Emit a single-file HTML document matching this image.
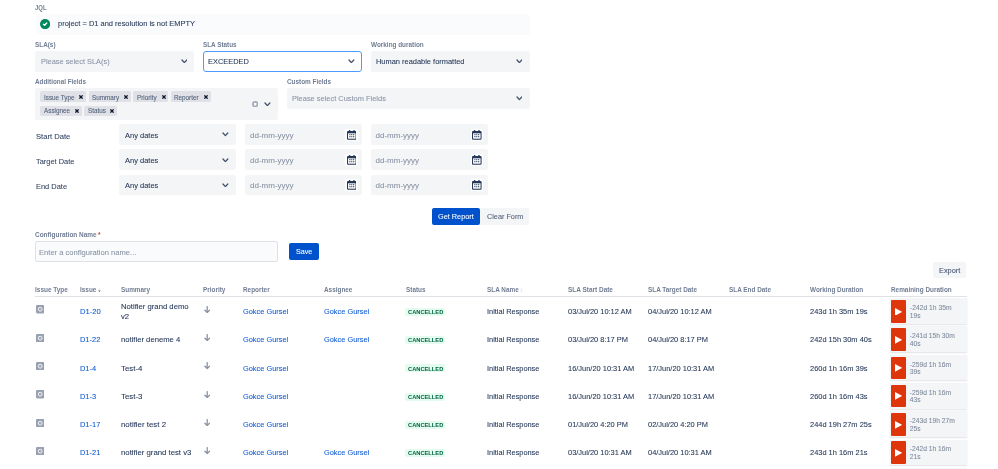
<!DOCTYPE html>
<html><head><meta charset="utf-8"><style>
html,body{margin:0;padding:0;background:#fff;width:998px;height:469px;overflow:hidden;}
body{position:relative;font-family:"Liberation Sans",sans-serif;}
.t{position:absolute;white-space:nowrap;transform-origin:0 0;}
.r{position:absolute;display:block;}
body>div,body>svg{filter:blur(0.28px);}
</style></head><body>
<div class="t" style="left:35.00px;top:4px;font-size:6.7px;line-height:7.484px;color:#707d93;font-weight:bold;transform:scaleX(0.8842);">JQL</div>
<div class="r" style="left:35.50px;top:13.50px;width:494.50px;height:21.00px;background:#fafbfc;border-radius:3px;"></div>
<svg class="r" style="left:39.8px;top:18.9px" width="10.2" height="10.2" viewBox="0 0 10 10"><circle cx="5" cy="5" r="5" fill="#00875a"/><path d="M3.4 5.1 L4.5 6.1 L6.6 4.0" fill="none" stroke="#fff" stroke-width="1.4" stroke-linecap="round" stroke-linejoin="round"/></svg>
<div class="t" style="left:58.30px;top:20px;font-size:8.0px;line-height:8.936px;color:#253858;font-weight:normal;transform:scaleX(0.9322);-webkit-text-stroke:0.08px currentColor;">project = D1 and resolution is not EMPTY</div>
<div class="t" style="left:35.00px;top:41px;font-size:6.7px;line-height:7.484px;color:#707d93;font-weight:bold;transform:scaleX(0.9514);">SLA(s)</div>
<div class="t" style="left:203.00px;top:41px;font-size:6.7px;line-height:7.484px;color:#707d93;font-weight:bold;transform:scaleX(0.9475);">SLA Status</div>
<div class="t" style="left:371.00px;top:41px;font-size:6.7px;line-height:7.484px;color:#707d93;font-weight:bold;transform:scaleX(0.9552);">Working duration</div>
<div class="r" style="left:35.00px;top:51.00px;width:159.00px;height:20.60px;background:#f4f5f7;border-radius:2.5px;"></div>
<div class="t" style="left:40.50px;top:58px;font-size:8.0px;line-height:8.936px;color:#8993a4;font-weight:normal;transform:scaleX(0.9239);-webkit-text-stroke:0.08px currentColor;">Please select SLA(s)</div>
<svg class="r" style="left:180.60px;top:58.70px" width="6.80" height="4.60"><path d="M1 1 L3.40 3.60 L5.80 1" fill="none" stroke="#42526e" stroke-width="1.3" stroke-linecap="round" stroke-linejoin="round"/></svg>
<div class="r" style="left:203.00px;top:51.00px;width:159.00px;height:20.60px;background:#ffffff;border:1.4px solid #4c9aff;box-sizing:border-box;border-radius:3px;"></div>
<div class="t" style="left:208.00px;top:58px;font-size:8.0px;line-height:8.936px;color:#253858;font-weight:normal;transform:scaleX(0.9300);-webkit-text-stroke:0.08px currentColor;">EXCEEDED</div>
<svg class="r" style="left:348.10px;top:58.70px" width="6.80" height="4.60"><path d="M1 1 L3.40 3.60 L5.80 1" fill="none" stroke="#42526e" stroke-width="1.3" stroke-linecap="round" stroke-linejoin="round"/></svg>
<div class="r" style="left:371.00px;top:51.00px;width:159.00px;height:20.60px;background:#f4f5f7;border-radius:2.5px;"></div>
<div class="t" style="left:376.00px;top:58px;font-size:8.0px;line-height:8.936px;color:#253858;font-weight:normal;transform:scaleX(0.9300);-webkit-text-stroke:0.08px currentColor;">Human readable formatted</div>
<svg class="r" style="left:515.60px;top:58.70px" width="6.80" height="4.60"><path d="M1 1 L3.40 3.60 L5.80 1" fill="none" stroke="#42526e" stroke-width="1.3" stroke-linecap="round" stroke-linejoin="round"/></svg>
<div class="t" style="left:35.00px;top:78px;font-size:6.7px;line-height:7.484px;color:#707d93;font-weight:bold;transform:scaleX(0.9467);">Additional Fields</div>
<div class="t" style="left:287.00px;top:78px;font-size:6.7px;line-height:7.484px;color:#707d93;font-weight:bold;transform:scaleX(0.9552);">Custom Fields</div>
<div class="r" style="left:35.00px;top:88.30px;width:243.00px;height:31.70px;background:#f4f5f7;border-radius:2.5px;"></div>
<div class="r" style="left:40.40px;top:91.30px;width:45.50px;height:10.50px;background:#dfe1e6;border-radius:1.5px;"></div>
<div class="t" style="left:43.70px;top:94px;font-size:6.8px;line-height:7.596px;color:#505f79;font-weight:normal;transform:scaleX(0.9300);-webkit-text-stroke:0.08px currentColor;">Issue Type</div>
<svg class="r" style="left:79.30px;top:94.55px" width="4" height="4"><path d="M0.8 0.8 L3.2 3.2 M3.2 0.8 L0.8 3.2" stroke="#0f1a2e" stroke-width="1.25" stroke-linecap="square"/></svg>
<div class="r" style="left:88.90px;top:91.30px;width:41.90px;height:10.50px;background:#dfe1e6;border-radius:1.5px;"></div>
<div class="t" style="left:92.20px;top:94px;font-size:6.8px;line-height:7.596px;color:#505f79;font-weight:normal;transform:scaleX(0.9300);-webkit-text-stroke:0.08px currentColor;">Summary</div>
<svg class="r" style="left:124.20px;top:94.55px" width="4" height="4"><path d="M0.8 0.8 L3.2 3.2 M3.2 0.8 L0.8 3.2" stroke="#0f1a2e" stroke-width="1.25" stroke-linecap="square"/></svg>
<div class="r" style="left:133.30px;top:91.30px;width:35.20px;height:10.50px;background:#dfe1e6;border-radius:1.5px;"></div>
<div class="t" style="left:136.60px;top:94px;font-size:6.8px;line-height:7.596px;color:#505f79;font-weight:normal;transform:scaleX(0.9300);-webkit-text-stroke:0.08px currentColor;">Priority</div>
<svg class="r" style="left:161.90px;top:94.55px" width="4" height="4"><path d="M0.8 0.8 L3.2 3.2 M3.2 0.8 L0.8 3.2" stroke="#0f1a2e" stroke-width="1.25" stroke-linecap="square"/></svg>
<div class="r" style="left:171.10px;top:91.30px;width:39.70px;height:10.50px;background:#dfe1e6;border-radius:1.5px;"></div>
<div class="t" style="left:174.40px;top:94px;font-size:6.8px;line-height:7.596px;color:#505f79;font-weight:normal;transform:scaleX(0.9300);-webkit-text-stroke:0.08px currentColor;">Reporter</div>
<svg class="r" style="left:204.20px;top:94.55px" width="4" height="4"><path d="M0.8 0.8 L3.2 3.2 M3.2 0.8 L0.8 3.2" stroke="#0f1a2e" stroke-width="1.25" stroke-linecap="square"/></svg>
<div class="r" style="left:40.40px;top:105.60px;width:41.40px;height:10.50px;background:#dfe1e6;border-radius:1.5px;"></div>
<div class="t" style="left:43.70px;top:107px;font-size:6.8px;line-height:7.596px;color:#505f79;font-weight:normal;transform:scaleX(0.9300);-webkit-text-stroke:0.08px currentColor;">Assignee</div>
<svg class="r" style="left:75.20px;top:108.85px" width="4" height="4"><path d="M0.8 0.8 L3.2 3.2 M3.2 0.8 L0.8 3.2" stroke="#0f1a2e" stroke-width="1.25" stroke-linecap="square"/></svg>
<div class="r" style="left:84.20px;top:105.60px;width:32.80px;height:10.50px;background:#dfe1e6;border-radius:1.5px;"></div>
<div class="t" style="left:87.50px;top:107px;font-size:6.8px;line-height:7.596px;color:#505f79;font-weight:normal;transform:scaleX(0.9300);-webkit-text-stroke:0.08px currentColor;">Status</div>
<svg class="r" style="left:110.40px;top:108.85px" width="4" height="4"><path d="M0.8 0.8 L3.2 3.2 M3.2 0.8 L0.8 3.2" stroke="#0f1a2e" stroke-width="1.25" stroke-linecap="square"/></svg>
<svg class="r" style="left:251.9px;top:101.1px" width="6.4" height="6.4" viewBox="0 0 10 10"><circle cx="5" cy="5" r="5" fill="#a5adba"/><path d="M3.4 3.4 L6.6 6.6 M6.6 3.4 L3.4 6.6" stroke="#ffffff" stroke-width="2.0" stroke-linecap="butt"/></svg>
<svg class="r" style="left:264.40px;top:101.80px" width="6.80" height="4.60"><path d="M1 1 L3.40 3.60 L5.80 1" fill="none" stroke="#42526e" stroke-width="1.3" stroke-linecap="round" stroke-linejoin="round"/></svg>
<div class="r" style="left:287.00px;top:88.30px;width:243.00px;height:20.30px;background:#f4f5f7;border-radius:2.5px;"></div>
<div class="t" style="left:292.00px;top:95px;font-size:8.0px;line-height:8.936px;color:#8993a4;font-weight:normal;transform:scaleX(0.9300);-webkit-text-stroke:0.08px currentColor;">Please select Custom Fields</div>
<svg class="r" style="left:515.60px;top:96.20px" width="6.80" height="4.60"><path d="M1 1 L3.40 3.60 L5.80 1" fill="none" stroke="#42526e" stroke-width="1.3" stroke-linecap="round" stroke-linejoin="round"/></svg>
<div class="t" style="left:36.00px;top:133px;font-size:8.0px;line-height:8.936px;color:#344563;font-weight:normal;transform:scaleX(0.9524);-webkit-text-stroke:0.08px currentColor;">Start Date</div>
<div class="r" style="left:119.00px;top:124.30px;width:117.00px;height:20.80px;background:#f4f5f7;border-radius:2.5px;"></div>
<div class="t" style="left:124.50px;top:132px;font-size:8.0px;line-height:8.936px;color:#253858;font-weight:normal;transform:scaleX(0.9360);-webkit-text-stroke:0.08px currentColor;">Any dates</div>
<svg class="r" style="left:222.40px;top:132.40px" width="6.80" height="4.60"><path d="M1 1 L3.40 3.60 L5.80 1" fill="none" stroke="#42526e" stroke-width="1.3" stroke-linecap="round" stroke-linejoin="round"/></svg>
<div class="r" style="left:245.00px;top:124.30px;width:117.00px;height:20.80px;background:#f4f5f7;border-radius:2.5px;"></div>
<div class="t" style="left:250.00px;top:132px;font-size:8.0px;line-height:8.936px;color:#8993a4;font-weight:normal;-webkit-text-stroke:0.08px currentColor;">dd-mm-yyyy</div>
<div class="r" style="left:345.20px;top:128.90px;width:12.6px;height:12px;background:#fff;border-radius:1.5px;"></div>
<svg class="r" style="left:346.80px;top:130.00px" width="9.6" height="9.8" viewBox="0 0 9.6 9.8"><rect x="0" y="0.9" width="9.6" height="8.9" rx="1.1" fill="#253858"/><rect x="2.0" y="0" width="1.3" height="2" rx="0.4" fill="#253858"/><rect x="6.3" y="0" width="1.3" height="2" rx="0.4" fill="#253858"/><rect x="1.05" y="3.3" width="7.5" height="5.4" fill="#ffffff"/><circle cx="2.90" cy="4.70" r="0.62" fill="#253858"/><circle cx="2.90" cy="6.70" r="0.62" fill="#253858"/><circle cx="4.80" cy="4.70" r="0.62" fill="#253858"/><circle cx="4.80" cy="6.70" r="0.62" fill="#253858"/><circle cx="6.70" cy="4.70" r="0.62" fill="#253858"/><circle cx="6.70" cy="6.70" r="0.62" fill="#253858"/></svg>
<div class="r" style="left:370.50px;top:124.30px;width:117.00px;height:20.80px;background:#f4f5f7;border-radius:2.5px;"></div>
<div class="t" style="left:375.50px;top:132px;font-size:8.0px;line-height:8.936px;color:#8993a4;font-weight:normal;-webkit-text-stroke:0.08px currentColor;">dd-mm-yyyy</div>
<div class="r" style="left:470.70px;top:128.90px;width:12.6px;height:12px;background:#fff;border-radius:1.5px;"></div>
<svg class="r" style="left:472.30px;top:130.00px" width="9.6" height="9.8" viewBox="0 0 9.6 9.8"><rect x="0" y="0.9" width="9.6" height="8.9" rx="1.1" fill="#253858"/><rect x="2.0" y="0" width="1.3" height="2" rx="0.4" fill="#253858"/><rect x="6.3" y="0" width="1.3" height="2" rx="0.4" fill="#253858"/><rect x="1.05" y="3.3" width="7.5" height="5.4" fill="#ffffff"/><circle cx="2.90" cy="4.70" r="0.62" fill="#253858"/><circle cx="2.90" cy="6.70" r="0.62" fill="#253858"/><circle cx="4.80" cy="4.70" r="0.62" fill="#253858"/><circle cx="4.80" cy="6.70" r="0.62" fill="#253858"/><circle cx="6.70" cy="4.70" r="0.62" fill="#253858"/><circle cx="6.70" cy="6.70" r="0.62" fill="#253858"/></svg>
<div class="t" style="left:36.00px;top:158px;font-size:8.0px;line-height:8.936px;color:#344563;font-weight:normal;transform:scaleX(0.9300);-webkit-text-stroke:0.08px currentColor;">Target Date</div>
<div class="r" style="left:119.00px;top:149.47px;width:117.00px;height:20.80px;background:#f4f5f7;border-radius:2.5px;"></div>
<div class="t" style="left:124.50px;top:157px;font-size:8.0px;line-height:8.936px;color:#253858;font-weight:normal;transform:scaleX(0.9360);-webkit-text-stroke:0.08px currentColor;">Any dates</div>
<svg class="r" style="left:222.40px;top:157.57px" width="6.80" height="4.60"><path d="M1 1 L3.40 3.60 L5.80 1" fill="none" stroke="#42526e" stroke-width="1.3" stroke-linecap="round" stroke-linejoin="round"/></svg>
<div class="r" style="left:245.00px;top:149.47px;width:117.00px;height:20.80px;background:#f4f5f7;border-radius:2.5px;"></div>
<div class="t" style="left:250.00px;top:157px;font-size:8.0px;line-height:8.936px;color:#8993a4;font-weight:normal;-webkit-text-stroke:0.08px currentColor;">dd-mm-yyyy</div>
<div class="r" style="left:345.20px;top:154.07px;width:12.6px;height:12px;background:#fff;border-radius:1.5px;"></div>
<svg class="r" style="left:346.80px;top:155.17px" width="9.6" height="9.8" viewBox="0 0 9.6 9.8"><rect x="0" y="0.9" width="9.6" height="8.9" rx="1.1" fill="#253858"/><rect x="2.0" y="0" width="1.3" height="2" rx="0.4" fill="#253858"/><rect x="6.3" y="0" width="1.3" height="2" rx="0.4" fill="#253858"/><rect x="1.05" y="3.3" width="7.5" height="5.4" fill="#ffffff"/><circle cx="2.90" cy="4.70" r="0.62" fill="#253858"/><circle cx="2.90" cy="6.70" r="0.62" fill="#253858"/><circle cx="4.80" cy="4.70" r="0.62" fill="#253858"/><circle cx="4.80" cy="6.70" r="0.62" fill="#253858"/><circle cx="6.70" cy="4.70" r="0.62" fill="#253858"/><circle cx="6.70" cy="6.70" r="0.62" fill="#253858"/></svg>
<div class="r" style="left:370.50px;top:149.47px;width:117.00px;height:20.80px;background:#f4f5f7;border-radius:2.5px;"></div>
<div class="t" style="left:375.50px;top:157px;font-size:8.0px;line-height:8.936px;color:#8993a4;font-weight:normal;-webkit-text-stroke:0.08px currentColor;">dd-mm-yyyy</div>
<div class="r" style="left:470.70px;top:154.07px;width:12.6px;height:12px;background:#fff;border-radius:1.5px;"></div>
<svg class="r" style="left:472.30px;top:155.17px" width="9.6" height="9.8" viewBox="0 0 9.6 9.8"><rect x="0" y="0.9" width="9.6" height="8.9" rx="1.1" fill="#253858"/><rect x="2.0" y="0" width="1.3" height="2" rx="0.4" fill="#253858"/><rect x="6.3" y="0" width="1.3" height="2" rx="0.4" fill="#253858"/><rect x="1.05" y="3.3" width="7.5" height="5.4" fill="#ffffff"/><circle cx="2.90" cy="4.70" r="0.62" fill="#253858"/><circle cx="2.90" cy="6.70" r="0.62" fill="#253858"/><circle cx="4.80" cy="4.70" r="0.62" fill="#253858"/><circle cx="4.80" cy="6.70" r="0.62" fill="#253858"/><circle cx="6.70" cy="4.70" r="0.62" fill="#253858"/><circle cx="6.70" cy="6.70" r="0.62" fill="#253858"/></svg>
<div class="t" style="left:36.00px;top:183px;font-size:8.0px;line-height:8.936px;color:#344563;font-weight:normal;transform:scaleX(0.9300);-webkit-text-stroke:0.08px currentColor;">End Date</div>
<div class="r" style="left:119.00px;top:174.64px;width:117.00px;height:20.80px;background:#f4f5f7;border-radius:2.5px;"></div>
<div class="t" style="left:124.50px;top:182px;font-size:8.0px;line-height:8.936px;color:#253858;font-weight:normal;transform:scaleX(0.9360);-webkit-text-stroke:0.08px currentColor;">Any dates</div>
<svg class="r" style="left:222.40px;top:182.74px" width="6.80" height="4.60"><path d="M1 1 L3.40 3.60 L5.80 1" fill="none" stroke="#42526e" stroke-width="1.3" stroke-linecap="round" stroke-linejoin="round"/></svg>
<div class="r" style="left:245.00px;top:174.64px;width:117.00px;height:20.80px;background:#f4f5f7;border-radius:2.5px;"></div>
<div class="t" style="left:250.00px;top:182px;font-size:8.0px;line-height:8.936px;color:#8993a4;font-weight:normal;-webkit-text-stroke:0.08px currentColor;">dd-mm-yyyy</div>
<div class="r" style="left:345.20px;top:179.24px;width:12.6px;height:12px;background:#fff;border-radius:1.5px;"></div>
<svg class="r" style="left:346.80px;top:180.34px" width="9.6" height="9.8" viewBox="0 0 9.6 9.8"><rect x="0" y="0.9" width="9.6" height="8.9" rx="1.1" fill="#253858"/><rect x="2.0" y="0" width="1.3" height="2" rx="0.4" fill="#253858"/><rect x="6.3" y="0" width="1.3" height="2" rx="0.4" fill="#253858"/><rect x="1.05" y="3.3" width="7.5" height="5.4" fill="#ffffff"/><circle cx="2.90" cy="4.70" r="0.62" fill="#253858"/><circle cx="2.90" cy="6.70" r="0.62" fill="#253858"/><circle cx="4.80" cy="4.70" r="0.62" fill="#253858"/><circle cx="4.80" cy="6.70" r="0.62" fill="#253858"/><circle cx="6.70" cy="4.70" r="0.62" fill="#253858"/><circle cx="6.70" cy="6.70" r="0.62" fill="#253858"/></svg>
<div class="r" style="left:370.50px;top:174.64px;width:117.00px;height:20.80px;background:#f4f5f7;border-radius:2.5px;"></div>
<div class="t" style="left:375.50px;top:182px;font-size:8.0px;line-height:8.936px;color:#8993a4;font-weight:normal;-webkit-text-stroke:0.08px currentColor;">dd-mm-yyyy</div>
<div class="r" style="left:470.70px;top:179.24px;width:12.6px;height:12px;background:#fff;border-radius:1.5px;"></div>
<svg class="r" style="left:472.30px;top:180.34px" width="9.6" height="9.8" viewBox="0 0 9.6 9.8"><rect x="0" y="0.9" width="9.6" height="8.9" rx="1.1" fill="#253858"/><rect x="2.0" y="0" width="1.3" height="2" rx="0.4" fill="#253858"/><rect x="6.3" y="0" width="1.3" height="2" rx="0.4" fill="#253858"/><rect x="1.05" y="3.3" width="7.5" height="5.4" fill="#ffffff"/><circle cx="2.90" cy="4.70" r="0.62" fill="#253858"/><circle cx="2.90" cy="6.70" r="0.62" fill="#253858"/><circle cx="4.80" cy="4.70" r="0.62" fill="#253858"/><circle cx="4.80" cy="6.70" r="0.62" fill="#253858"/><circle cx="6.70" cy="4.70" r="0.62" fill="#253858"/><circle cx="6.70" cy="6.70" r="0.62" fill="#253858"/></svg>
<div class="r" style="left:432.00px;top:208.00px;width:48.20px;height:16.50px;background:#0052cc;border-radius:2px;"></div>
<div class="t" style="left:438.20px;top:213px;font-size:8.0px;line-height:8.936px;color:#ffffff;font-weight:normal;transform:scaleX(0.9149);-webkit-text-stroke:0.08px currentColor;">Get Report</div>
<div class="r" style="left:480.20px;top:208.00px;width:49.00px;height:16.50px;background:#f4f5f7;border-radius:2px;"></div>
<div class="t" style="left:486.70px;top:213px;font-size:8.0px;line-height:8.936px;color:#505f79;font-weight:normal;transform:scaleX(0.9099);-webkit-text-stroke:0.08px currentColor;">Clear Form</div>
<div class="t" style="left:35.00px;top:231px;font-size:6.7px;line-height:7.484px;color:#707d93;font-weight:bold;transform:scaleX(0.9655);">Configuration Name</div>
<div class="t" style="left:98.30px;top:231px;font-size:6.7px;line-height:7.484px;color:#de350b;font-weight:bold;transform:scaleX(0.9552);">*</div>
<div class="r" style="left:35.00px;top:241.00px;width:243.00px;height:20.50px;background:#fafbfc;border:1px solid #dfe1e6;box-sizing:border-box;border-radius:2px;"></div>
<div class="t" style="left:39.40px;top:249px;font-size:8.0px;line-height:8.936px;color:#8993a4;font-weight:normal;transform:scaleX(0.9481);-webkit-text-stroke:0.08px currentColor;">Enter a configuration name...</div>
<div class="r" style="left:289.00px;top:243.00px;width:29.60px;height:17.00px;background:#0052cc;border-radius:2px;"></div>
<div class="t" style="left:295.60px;top:248px;font-size:8.0px;line-height:8.936px;color:#ffffff;font-weight:normal;transform:scaleX(0.8884);-webkit-text-stroke:0.08px currentColor;">Save</div>
<div class="r" style="left:933.40px;top:262.20px;width:32.70px;height:16.10px;background:#f4f5f7;border-radius:2px;"></div>
<div class="t" style="left:939.00px;top:267px;font-size:8.0px;line-height:8.936px;color:#42526e;font-weight:normal;transform:scaleX(0.9212);-webkit-text-stroke:0.08px currentColor;">Export</div>
<div class="t" style="left:35.00px;top:286px;font-size:6.7px;line-height:7.484px;color:#707d93;font-weight:bold;transform:scaleX(0.9657);">Issue Type</div>
<div class="t" style="left:80.20px;top:286px;font-size:6.7px;line-height:7.484px;color:#707d93;font-weight:bold;transform:scaleX(0.9552);">Issue</div>
<div class="t" style="left:121.20px;top:286px;font-size:6.7px;line-height:7.484px;color:#707d93;font-weight:bold;transform:scaleX(0.9552);">Summary</div>
<div class="t" style="left:202.50px;top:286px;font-size:6.7px;line-height:7.484px;color:#707d93;font-weight:bold;transform:scaleX(0.9552);">Priority</div>
<div class="t" style="left:243.00px;top:286px;font-size:6.7px;line-height:7.484px;color:#707d93;font-weight:bold;transform:scaleX(0.9552);">Reporter</div>
<div class="t" style="left:324.40px;top:286px;font-size:6.7px;line-height:7.484px;color:#707d93;font-weight:bold;transform:scaleX(0.9552);">Assignee</div>
<div class="t" style="left:405.80px;top:286px;font-size:6.7px;line-height:7.484px;color:#707d93;font-weight:bold;transform:scaleX(0.9552);">Status</div>
<div class="t" style="left:487.00px;top:286px;font-size:6.7px;line-height:7.484px;color:#707d93;font-weight:bold;transform:scaleX(0.9552);">SLA Name</div>
<div class="t" style="left:567.60px;top:286px;font-size:6.7px;line-height:7.484px;color:#707d93;font-weight:bold;transform:scaleX(0.9654);">SLA Start Date</div>
<div class="t" style="left:648.30px;top:286px;font-size:6.7px;line-height:7.484px;color:#707d93;font-weight:bold;transform:scaleX(0.9552);">SLA Target Date</div>
<div class="t" style="left:729.00px;top:286px;font-size:6.7px;line-height:7.484px;color:#707d93;font-weight:bold;transform:scaleX(0.9552);">SLA End Date</div>
<div class="t" style="left:809.90px;top:286px;font-size:6.7px;line-height:7.484px;color:#707d93;font-weight:bold;transform:scaleX(0.9504);">Working Duration</div>
<div class="t" style="left:890.60px;top:286px;font-size:6.7px;line-height:7.484px;color:#707d93;font-weight:bold;transform:scaleX(0.9552);">Remaining Duration</div>
<svg class="r" style="left:97.5px;top:287.5px" width="3" height="4.6"><path d="M0.2 1.5 L1.5 0.2 L2.8 1.5 Z" fill="#dfe1e6"/><path d="M0.2 2.6 L2.8 2.6 L1.5 4.3 Z" fill="#6b778c"/></svg>
<svg class="r" style="left:520px;top:287.5px" width="3" height="4.6"><path d="M0.2 1.5 L1.5 0.2 L2.8 1.5 Z" fill="#dfe1e6"/><path d="M0.2 2.6 L2.8 2.6 L1.5 4.3 Z" fill="#dfe1e6"/></svg>
<div class="r" style="left:35.00px;top:295.80px;width:931.50px;height:1.20px;background:#dfe1e6;"></div>
<svg class="r" style="left:35.8px;top:305.40px" width="8.4" height="8.4" viewBox="0 0 16 16"><rect width="16" height="16" rx="2.5" fill="#97a0af"/><circle cx="8" cy="8" r="3.7" fill="none" stroke="#fff" stroke-width="1.7"/><circle cx="8" cy="8" r="1.3" fill="#fff" fill-opacity="0.3"/></svg>
<div class="t" style="left:80.20px;top:308px;font-size:8.0px;line-height:8.936px;color:#0f5bd3;font-weight:normal;transform:scaleX(0.9500);-webkit-text-stroke:0.08px currentColor;">D1-20</div>
<div class="t" style="left:121.20px;top:303px;font-size:8.0px;line-height:8.936px;color:#253858;font-weight:normal;transform:scaleX(0.9622);-webkit-text-stroke:0.08px currentColor;">Notifier grand demo</div>
<div class="t" style="left:121.20px;top:313px;font-size:8.0px;line-height:8.936px;color:#253858;font-weight:normal;transform:scaleX(0.9600);-webkit-text-stroke:0.08px currentColor;">v2</div>
<svg class="r" style="left:203.8px;top:305.80px" width="6.4" height="7.4"><path d="M3.2 0.6 V6.4 M0.9 4.2 L3.2 6.5 L5.5 4.2" fill="none" stroke="#8993a4" stroke-width="1.3" stroke-linecap="round" stroke-linejoin="round"/></svg>
<div class="t" style="left:243.00px;top:308px;font-size:8.0px;line-height:8.936px;color:#0f5bd3;font-weight:normal;transform:scaleX(0.9242);-webkit-text-stroke:0.08px currentColor;">Gokce Gursel</div>
<div class="t" style="left:324.40px;top:308px;font-size:8.0px;line-height:8.936px;color:#0f5bd3;font-weight:normal;transform:scaleX(0.9242);-webkit-text-stroke:0.08px currentColor;">Gokce Gursel</div>
<div class="r" style="left:405.20px;top:307.80px;width:39.80px;height:8.00px;background:#e3fcef;border-radius:2px;"></div>
<div class="t" style="left:407.80px;top:309px;font-size:6.2px;line-height:6.925px;color:#006644;font-weight:bold;transform:scaleX(0.9252);">CANCELLED</div>
<div class="t" style="left:487.00px;top:308px;font-size:8.0px;line-height:8.936px;color:#253858;font-weight:normal;transform:scaleX(0.9206);-webkit-text-stroke:0.08px currentColor;">Initial Response</div>
<div class="t" style="left:567.60px;top:308px;font-size:8.0px;line-height:8.936px;color:#253858;font-weight:normal;transform:scaleX(0.9300);-webkit-text-stroke:0.08px currentColor;">03/Jul/20 10:12 AM</div>
<div class="t" style="left:648.30px;top:308px;font-size:8.0px;line-height:8.936px;color:#253858;font-weight:normal;transform:scaleX(0.9300);-webkit-text-stroke:0.08px currentColor;">04/Jul/20 10:12 AM</div>
<div class="t" style="left:809.90px;top:308px;font-size:8.0px;line-height:8.936px;color:#253858;font-weight:normal;transform:scaleX(0.9300);-webkit-text-stroke:0.08px currentColor;">243d 1h 35m 19s</div>
<div class="r" style="left:890.00px;top:298.20px;width:76.50px;height:25.50px;background:#f4f5f7;box-shadow:0 1px 1.5px rgba(9,30,66,0.13);"></div>
<div class="r" style="left:890.80px;top:300.00px;width:15.10px;height:22.60px;background:#de350b;border-radius:1px;"></div>
<svg class="r" style="left:894.8px;top:307.60px" width="7.2" height="7.8"><path d="M0 0 L7.2 3.9 L0 7.8 Z" fill="#fff"/></svg>
<div class="t" style="left:909.80px;top:304px;font-size:6.7px;line-height:7.484px;color:#7f8a9b;font-weight:normal;transform:scaleX(1.0056);-webkit-text-stroke:0.08px currentColor;">-242d 1h 35m</div>
<div class="t" style="left:909.80px;top:312px;font-size:6.7px;line-height:7.484px;color:#7f8a9b;font-weight:normal;-webkit-text-stroke:0.08px currentColor;">19s</div>
<svg class="r" style="left:35.8px;top:333.68px" width="8.4" height="8.4" viewBox="0 0 16 16"><rect width="16" height="16" rx="2.5" fill="#97a0af"/><circle cx="8" cy="8" r="3.7" fill="none" stroke="#fff" stroke-width="1.7"/><circle cx="8" cy="8" r="1.3" fill="#fff" fill-opacity="0.3"/></svg>
<div class="t" style="left:80.20px;top:336px;font-size:8.0px;line-height:8.936px;color:#0f5bd3;font-weight:normal;transform:scaleX(0.9300);-webkit-text-stroke:0.08px currentColor;">D1-22</div>
<div class="t" style="left:121.20px;top:336px;font-size:8.0px;line-height:8.936px;color:#253858;font-weight:normal;transform:scaleX(0.9577);-webkit-text-stroke:0.08px currentColor;">notifier deneme 4</div>
<svg class="r" style="left:203.8px;top:334.08px" width="6.4" height="7.4"><path d="M3.2 0.6 V6.4 M0.9 4.2 L3.2 6.5 L5.5 4.2" fill="none" stroke="#8993a4" stroke-width="1.3" stroke-linecap="round" stroke-linejoin="round"/></svg>
<div class="t" style="left:243.00px;top:336px;font-size:8.0px;line-height:8.936px;color:#0f5bd3;font-weight:normal;transform:scaleX(0.9242);-webkit-text-stroke:0.08px currentColor;">Gokce Gursel</div>
<div class="t" style="left:324.40px;top:336px;font-size:8.0px;line-height:8.936px;color:#0f5bd3;font-weight:normal;transform:scaleX(0.9242);-webkit-text-stroke:0.08px currentColor;">Gokce Gursel</div>
<div class="r" style="left:405.20px;top:336.08px;width:39.80px;height:8.00px;background:#e3fcef;border-radius:2px;"></div>
<div class="t" style="left:407.80px;top:337px;font-size:6.2px;line-height:6.925px;color:#006644;font-weight:bold;transform:scaleX(0.9252);">CANCELLED</div>
<div class="t" style="left:487.00px;top:336px;font-size:8.0px;line-height:8.936px;color:#253858;font-weight:normal;transform:scaleX(0.9206);-webkit-text-stroke:0.08px currentColor;">Initial Response</div>
<div class="t" style="left:567.60px;top:336px;font-size:8.0px;line-height:8.936px;color:#253858;font-weight:normal;transform:scaleX(0.9300);-webkit-text-stroke:0.08px currentColor;">03/Jul/20 8:17 PM</div>
<div class="t" style="left:648.30px;top:336px;font-size:8.0px;line-height:8.936px;color:#253858;font-weight:normal;transform:scaleX(0.9300);-webkit-text-stroke:0.08px currentColor;">04/Jul/20 8:17 PM</div>
<div class="t" style="left:809.90px;top:336px;font-size:8.0px;line-height:8.936px;color:#253858;font-weight:normal;transform:scaleX(0.9300);-webkit-text-stroke:0.08px currentColor;">242d 15h 30m 40s</div>
<div class="r" style="left:890.00px;top:326.48px;width:76.50px;height:25.50px;background:#f4f5f7;box-shadow:0 1px 1.5px rgba(9,30,66,0.13);"></div>
<div class="r" style="left:890.80px;top:328.28px;width:15.10px;height:22.60px;background:#de350b;border-radius:1px;"></div>
<svg class="r" style="left:894.8px;top:335.88px" width="7.2" height="7.8"><path d="M0 0 L7.2 3.9 L0 7.8 Z" fill="#fff"/></svg>
<div class="t" style="left:909.80px;top:332px;font-size:6.7px;line-height:7.484px;color:#7f8a9b;font-weight:normal;-webkit-text-stroke:0.08px currentColor;">-241d 15h 30m</div>
<div class="t" style="left:909.80px;top:340px;font-size:6.7px;line-height:7.484px;color:#7f8a9b;font-weight:normal;-webkit-text-stroke:0.08px currentColor;">40s</div>
<svg class="r" style="left:35.8px;top:361.96px" width="8.4" height="8.4" viewBox="0 0 16 16"><rect width="16" height="16" rx="2.5" fill="#97a0af"/><circle cx="8" cy="8" r="3.7" fill="none" stroke="#fff" stroke-width="1.7"/><circle cx="8" cy="8" r="1.3" fill="#fff" fill-opacity="0.3"/></svg>
<div class="t" style="left:80.20px;top:365px;font-size:8.0px;line-height:8.936px;color:#0f5bd3;font-weight:normal;transform:scaleX(0.9300);-webkit-text-stroke:0.08px currentColor;">D1-4</div>
<div class="t" style="left:121.20px;top:365px;font-size:8.0px;line-height:8.936px;color:#253858;font-weight:normal;transform:scaleX(0.9823);-webkit-text-stroke:0.08px currentColor;">Test-4</div>
<svg class="r" style="left:203.8px;top:362.36px" width="6.4" height="7.4"><path d="M3.2 0.6 V6.4 M0.9 4.2 L3.2 6.5 L5.5 4.2" fill="none" stroke="#8993a4" stroke-width="1.3" stroke-linecap="round" stroke-linejoin="round"/></svg>
<div class="t" style="left:243.00px;top:365px;font-size:8.0px;line-height:8.936px;color:#0f5bd3;font-weight:normal;transform:scaleX(0.9242);-webkit-text-stroke:0.08px currentColor;">Gokce Gursel</div>
<div class="r" style="left:405.20px;top:364.36px;width:39.80px;height:8.00px;background:#e3fcef;border-radius:2px;"></div>
<div class="t" style="left:407.80px;top:366px;font-size:6.2px;line-height:6.925px;color:#006644;font-weight:bold;transform:scaleX(0.9252);">CANCELLED</div>
<div class="t" style="left:487.00px;top:365px;font-size:8.0px;line-height:8.936px;color:#253858;font-weight:normal;transform:scaleX(0.9206);-webkit-text-stroke:0.08px currentColor;">Initial Response</div>
<div class="t" style="left:567.60px;top:365px;font-size:8.0px;line-height:8.936px;color:#253858;font-weight:normal;transform:scaleX(0.9300);-webkit-text-stroke:0.08px currentColor;">16/Jun/20 10:31 AM</div>
<div class="t" style="left:648.30px;top:365px;font-size:8.0px;line-height:8.936px;color:#253858;font-weight:normal;transform:scaleX(0.9300);-webkit-text-stroke:0.08px currentColor;">17/Jun/20 10:31 AM</div>
<div class="t" style="left:809.90px;top:365px;font-size:8.0px;line-height:8.936px;color:#253858;font-weight:normal;transform:scaleX(0.9300);-webkit-text-stroke:0.08px currentColor;">260d 1h 16m 39s</div>
<div class="r" style="left:890.00px;top:354.76px;width:76.50px;height:25.50px;background:#f4f5f7;box-shadow:0 1px 1.5px rgba(9,30,66,0.13);"></div>
<div class="r" style="left:890.80px;top:356.56px;width:15.10px;height:22.60px;background:#de350b;border-radius:1px;"></div>
<svg class="r" style="left:894.8px;top:364.16px" width="7.2" height="7.8"><path d="M0 0 L7.2 3.9 L0 7.8 Z" fill="#fff"/></svg>
<div class="t" style="left:909.80px;top:361px;font-size:6.7px;line-height:7.484px;color:#7f8a9b;font-weight:normal;-webkit-text-stroke:0.08px currentColor;">-259d 1h 16m</div>
<div class="t" style="left:909.80px;top:368px;font-size:6.7px;line-height:7.484px;color:#7f8a9b;font-weight:normal;-webkit-text-stroke:0.08px currentColor;">39s</div>
<svg class="r" style="left:35.8px;top:390.24px" width="8.4" height="8.4" viewBox="0 0 16 16"><rect width="16" height="16" rx="2.5" fill="#97a0af"/><circle cx="8" cy="8" r="3.7" fill="none" stroke="#fff" stroke-width="1.7"/><circle cx="8" cy="8" r="1.3" fill="#fff" fill-opacity="0.3"/></svg>
<div class="t" style="left:80.20px;top:393px;font-size:8.0px;line-height:8.936px;color:#0f5bd3;font-weight:normal;transform:scaleX(0.9300);-webkit-text-stroke:0.08px currentColor;">D1-3</div>
<div class="t" style="left:121.20px;top:393px;font-size:8.0px;line-height:8.936px;color:#253858;font-weight:normal;transform:scaleX(0.9823);-webkit-text-stroke:0.08px currentColor;">Test-3</div>
<svg class="r" style="left:203.8px;top:390.64px" width="6.4" height="7.4"><path d="M3.2 0.6 V6.4 M0.9 4.2 L3.2 6.5 L5.5 4.2" fill="none" stroke="#8993a4" stroke-width="1.3" stroke-linecap="round" stroke-linejoin="round"/></svg>
<div class="t" style="left:243.00px;top:393px;font-size:8.0px;line-height:8.936px;color:#0f5bd3;font-weight:normal;transform:scaleX(0.9242);-webkit-text-stroke:0.08px currentColor;">Gokce Gursel</div>
<div class="r" style="left:405.20px;top:392.64px;width:39.80px;height:8.00px;background:#e3fcef;border-radius:2px;"></div>
<div class="t" style="left:407.80px;top:394px;font-size:6.2px;line-height:6.925px;color:#006644;font-weight:bold;transform:scaleX(0.9252);">CANCELLED</div>
<div class="t" style="left:487.00px;top:393px;font-size:8.0px;line-height:8.936px;color:#253858;font-weight:normal;transform:scaleX(0.9206);-webkit-text-stroke:0.08px currentColor;">Initial Response</div>
<div class="t" style="left:567.60px;top:393px;font-size:8.0px;line-height:8.936px;color:#253858;font-weight:normal;transform:scaleX(0.9300);-webkit-text-stroke:0.08px currentColor;">16/Jun/20 10:31 AM</div>
<div class="t" style="left:648.30px;top:393px;font-size:8.0px;line-height:8.936px;color:#253858;font-weight:normal;transform:scaleX(0.9300);-webkit-text-stroke:0.08px currentColor;">17/Jun/20 10:31 AM</div>
<div class="t" style="left:809.90px;top:393px;font-size:8.0px;line-height:8.936px;color:#253858;font-weight:normal;transform:scaleX(0.9300);-webkit-text-stroke:0.08px currentColor;">260d 1h 16m 43s</div>
<div class="r" style="left:890.00px;top:383.04px;width:76.50px;height:25.50px;background:#f4f5f7;box-shadow:0 1px 1.5px rgba(9,30,66,0.13);"></div>
<div class="r" style="left:890.80px;top:384.84px;width:15.10px;height:22.60px;background:#de350b;border-radius:1px;"></div>
<svg class="r" style="left:894.8px;top:392.44px" width="7.2" height="7.8"><path d="M0 0 L7.2 3.9 L0 7.8 Z" fill="#fff"/></svg>
<div class="t" style="left:909.80px;top:389px;font-size:6.7px;line-height:7.484px;color:#7f8a9b;font-weight:normal;-webkit-text-stroke:0.08px currentColor;">-259d 1h 16m</div>
<div class="t" style="left:909.80px;top:396px;font-size:6.7px;line-height:7.484px;color:#7f8a9b;font-weight:normal;-webkit-text-stroke:0.08px currentColor;">43s</div>
<svg class="r" style="left:35.8px;top:418.52px" width="8.4" height="8.4" viewBox="0 0 16 16"><rect width="16" height="16" rx="2.5" fill="#97a0af"/><circle cx="8" cy="8" r="3.7" fill="none" stroke="#fff" stroke-width="1.7"/><circle cx="8" cy="8" r="1.3" fill="#fff" fill-opacity="0.3"/></svg>
<div class="t" style="left:80.20px;top:421px;font-size:8.0px;line-height:8.936px;color:#0f5bd3;font-weight:normal;transform:scaleX(0.9300);-webkit-text-stroke:0.08px currentColor;">D1-17</div>
<div class="t" style="left:121.20px;top:421px;font-size:8.0px;line-height:8.936px;color:#253858;font-weight:normal;transform:scaleX(0.9825);-webkit-text-stroke:0.08px currentColor;">notifier test 2</div>
<svg class="r" style="left:203.8px;top:418.92px" width="6.4" height="7.4"><path d="M3.2 0.6 V6.4 M0.9 4.2 L3.2 6.5 L5.5 4.2" fill="none" stroke="#8993a4" stroke-width="1.3" stroke-linecap="round" stroke-linejoin="round"/></svg>
<div class="t" style="left:243.00px;top:421px;font-size:8.0px;line-height:8.936px;color:#0f5bd3;font-weight:normal;transform:scaleX(0.9242);-webkit-text-stroke:0.08px currentColor;">Gokce Gursel</div>
<div class="r" style="left:405.20px;top:420.92px;width:39.80px;height:8.00px;background:#e3fcef;border-radius:2px;"></div>
<div class="t" style="left:407.80px;top:422px;font-size:6.2px;line-height:6.925px;color:#006644;font-weight:bold;transform:scaleX(0.9252);">CANCELLED</div>
<div class="t" style="left:487.00px;top:421px;font-size:8.0px;line-height:8.936px;color:#253858;font-weight:normal;transform:scaleX(0.9206);-webkit-text-stroke:0.08px currentColor;">Initial Response</div>
<div class="t" style="left:567.60px;top:421px;font-size:8.0px;line-height:8.936px;color:#253858;font-weight:normal;transform:scaleX(0.9300);-webkit-text-stroke:0.08px currentColor;">01/Jul/20 4:20 PM</div>
<div class="t" style="left:648.30px;top:421px;font-size:8.0px;line-height:8.936px;color:#253858;font-weight:normal;transform:scaleX(0.9300);-webkit-text-stroke:0.08px currentColor;">02/Jul/20 4:20 PM</div>
<div class="t" style="left:809.90px;top:421px;font-size:8.0px;line-height:8.936px;color:#253858;font-weight:normal;transform:scaleX(0.9300);-webkit-text-stroke:0.08px currentColor;">244d 19h 27m 25s</div>
<div class="r" style="left:890.00px;top:411.32px;width:76.50px;height:25.50px;background:#f4f5f7;box-shadow:0 1px 1.5px rgba(9,30,66,0.13);"></div>
<div class="r" style="left:890.80px;top:413.12px;width:15.10px;height:22.60px;background:#de350b;border-radius:1px;"></div>
<svg class="r" style="left:894.8px;top:420.72px" width="7.2" height="7.8"><path d="M0 0 L7.2 3.9 L0 7.8 Z" fill="#fff"/></svg>
<div class="t" style="left:909.80px;top:417px;font-size:6.7px;line-height:7.484px;color:#7f8a9b;font-weight:normal;-webkit-text-stroke:0.08px currentColor;">-243d 19h 27m</div>
<div class="t" style="left:909.80px;top:425px;font-size:6.7px;line-height:7.484px;color:#7f8a9b;font-weight:normal;-webkit-text-stroke:0.08px currentColor;">25s</div>
<svg class="r" style="left:35.8px;top:446.80px" width="8.4" height="8.4" viewBox="0 0 16 16"><rect width="16" height="16" rx="2.5" fill="#97a0af"/><circle cx="8" cy="8" r="3.7" fill="none" stroke="#fff" stroke-width="1.7"/><circle cx="8" cy="8" r="1.3" fill="#fff" fill-opacity="0.3"/></svg>
<div class="t" style="left:80.20px;top:449px;font-size:8.0px;line-height:8.936px;color:#0f5bd3;font-weight:normal;transform:scaleX(0.9300);-webkit-text-stroke:0.08px currentColor;">D1-21</div>
<div class="t" style="left:121.20px;top:449px;font-size:8.0px;line-height:8.936px;color:#253858;font-weight:normal;transform:scaleX(0.9712);-webkit-text-stroke:0.08px currentColor;">notifier grand test v3</div>
<svg class="r" style="left:203.8px;top:447.20px" width="6.4" height="7.4"><path d="M3.2 0.6 V6.4 M0.9 4.2 L3.2 6.5 L5.5 4.2" fill="none" stroke="#8993a4" stroke-width="1.3" stroke-linecap="round" stroke-linejoin="round"/></svg>
<div class="t" style="left:243.00px;top:449px;font-size:8.0px;line-height:8.936px;color:#0f5bd3;font-weight:normal;transform:scaleX(0.9242);-webkit-text-stroke:0.08px currentColor;">Gokce Gursel</div>
<div class="t" style="left:324.40px;top:449px;font-size:8.0px;line-height:8.936px;color:#0f5bd3;font-weight:normal;transform:scaleX(0.9242);-webkit-text-stroke:0.08px currentColor;">Gokce Gursel</div>
<div class="r" style="left:405.20px;top:449.20px;width:39.80px;height:8.00px;background:#e3fcef;border-radius:2px;"></div>
<div class="t" style="left:407.80px;top:450px;font-size:6.2px;line-height:6.925px;color:#006644;font-weight:bold;transform:scaleX(0.9252);">CANCELLED</div>
<div class="t" style="left:487.00px;top:449px;font-size:8.0px;line-height:8.936px;color:#253858;font-weight:normal;transform:scaleX(0.9206);-webkit-text-stroke:0.08px currentColor;">Initial Response</div>
<div class="t" style="left:567.60px;top:449px;font-size:8.0px;line-height:8.936px;color:#253858;font-weight:normal;transform:scaleX(0.9300);-webkit-text-stroke:0.08px currentColor;">03/Jul/20 10:31 AM</div>
<div class="t" style="left:648.30px;top:449px;font-size:8.0px;line-height:8.936px;color:#253858;font-weight:normal;transform:scaleX(0.9300);-webkit-text-stroke:0.08px currentColor;">04/Jul/20 10:31 AM</div>
<div class="t" style="left:809.90px;top:449px;font-size:8.0px;line-height:8.936px;color:#253858;font-weight:normal;transform:scaleX(0.9300);-webkit-text-stroke:0.08px currentColor;">243d 1h 16m 21s</div>
<div class="r" style="left:890.00px;top:439.60px;width:76.50px;height:25.50px;background:#f4f5f7;box-shadow:0 1px 1.5px rgba(9,30,66,0.13);"></div>
<div class="r" style="left:890.80px;top:441.40px;width:15.10px;height:22.60px;background:#de350b;border-radius:1px;"></div>
<svg class="r" style="left:894.8px;top:449.00px" width="7.2" height="7.8"><path d="M0 0 L7.2 3.9 L0 7.8 Z" fill="#fff"/></svg>
<div class="t" style="left:909.80px;top:445px;font-size:6.7px;line-height:7.484px;color:#7f8a9b;font-weight:normal;-webkit-text-stroke:0.08px currentColor;">-242d 1h 16m</div>
<div class="t" style="left:909.80px;top:453px;font-size:6.7px;line-height:7.484px;color:#7f8a9b;font-weight:normal;-webkit-text-stroke:0.08px currentColor;">21s</div>
<div class="r" style="left:890.00px;top:467.50px;width:76.50px;height:1.50px;background:#f4f5f7;"></div>
</body></html>
